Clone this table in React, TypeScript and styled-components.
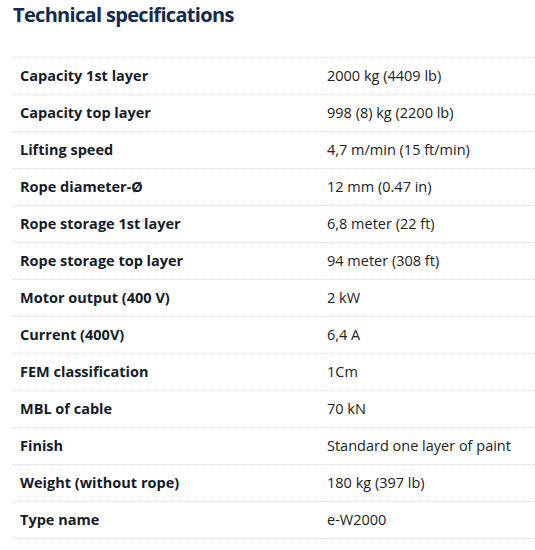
import React from "react";
import styled, { createGlobalStyle } from "styled-components";

const Global = createGlobalStyle`
  html, body { margin: 0; padding: 0; background: #fff; }
  body { font-family: "Open Sans", "Liberation Sans", sans-serif; }
`;

const Wrap = styled.div`
  padding: 0 0 0 13px;
  width: 535px;
  box-sizing: border-box;
`;

const Title = styled.h2`
  margin: 0;
  padding-top: 1px;
  height: 57px;
  box-sizing: border-box;
  font-size: 20px;
  font-weight: 700;
  letter-spacing: -0.68px;
  color: #15294b;
  line-height: 28px;
`;

const Table = styled.table`
  width: 100%;
  border-collapse: collapse;
  font-size: 14.5px;
  line-height: 20px;
  color: #1f1f1f;
`;

const Row = styled.tr`
  border-top: 1px dotted #dcdcdc;
  &:last-child { border-bottom: 1px dotted #dcdcdc; }
`;

const Label = styled.td`
  width: 307px;
  height: 36px;
  padding: 0 0 0 7px;
  font-weight: 700;
  color: #151c28;
`;

const Value = styled.td`
  padding: 0;
  color: #222;
`;

const specs: [string, string][] = [
  ["Capacity 1st layer", "2000 kg (4409 lb)"],
  ["Capacity top layer", "998 (8) kg (2200 lb)"],
  ["Lifting speed", "4,7 m/min (15 ft/min)"],
  ["Rope diameter-Ø", "12 mm (0.47 in)"],
  ["Rope storage 1st layer", "6,8 meter (22 ft)"],
  ["Rope storage top layer", "94 meter (308 ft)"],
  ["Motor output (400 V)", "2 kW"],
  ["Current (400V)", "6,4 A"],
  ["FEM classification", "1Cm"],
  ["MBL of cable", "70 kN"],
  ["Finish", "Standard one layer of paint"],
  ["Weight (without rope)", "180 kg (397 lb)"],
  ["Type name", "e-W2000"],
];

export default function App() {
  return (
    <Wrap>
      <Global />
      <Title>Technical specifications</Title>
      <Table>
        <tbody>
          {specs.map(([k, v]) => (
            <Row key={k}>
              <Label>{k}</Label>
              <Value>{v}</Value>
            </Row>
          ))}
        </tbody>
      </Table>
    </Wrap>
  );
}
